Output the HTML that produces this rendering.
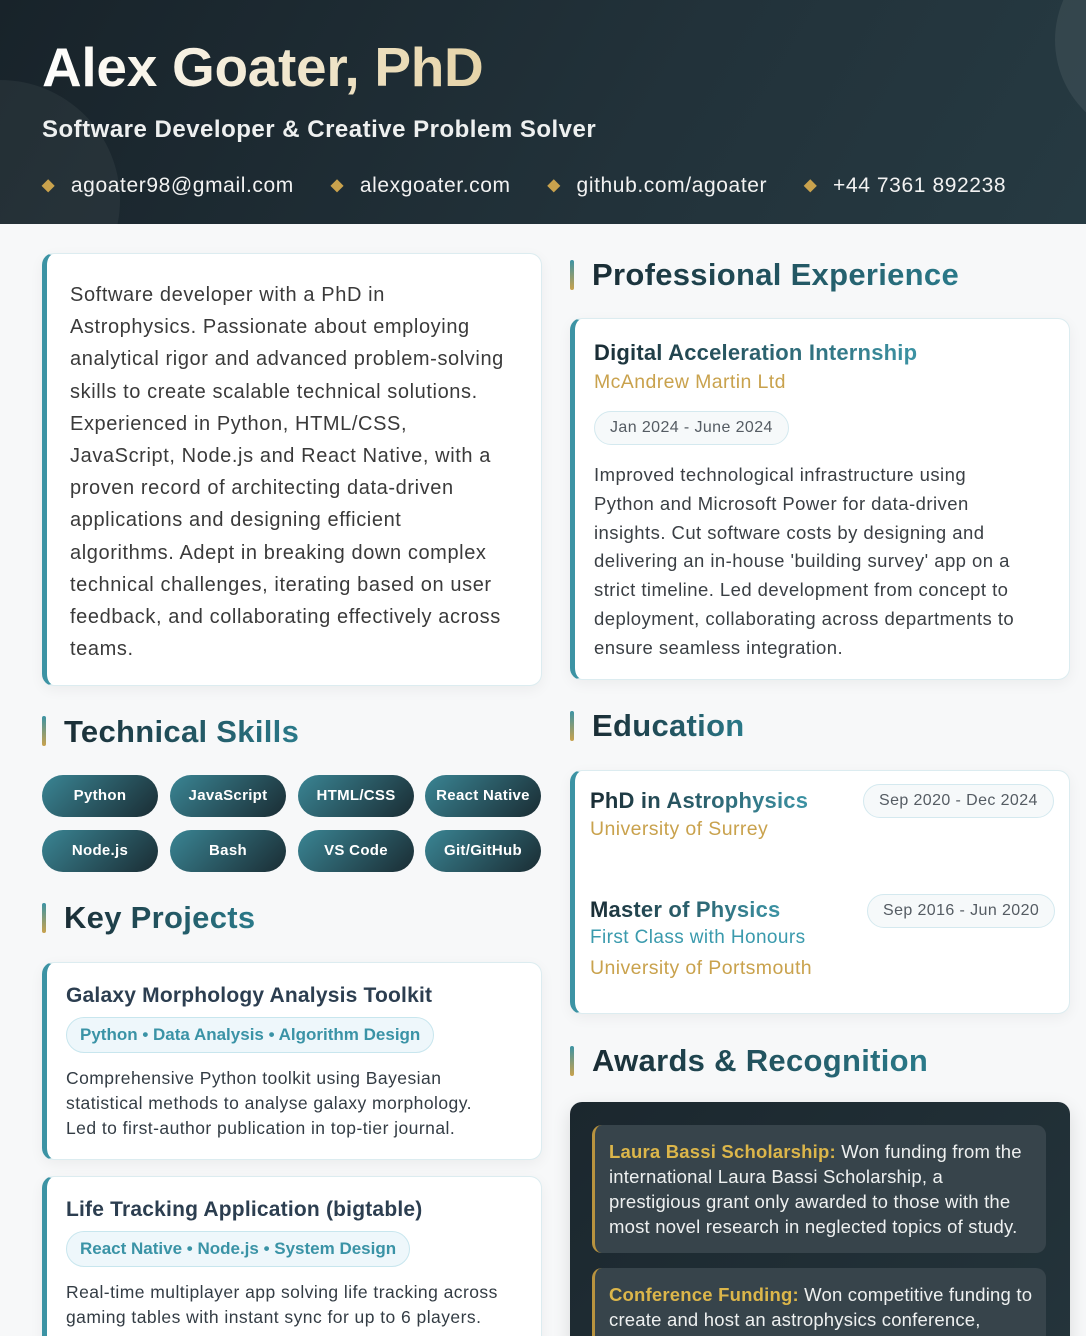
<!DOCTYPE html>
<html><head><meta charset="utf-8"><style>
*{margin:0;padding:0;box-sizing:border-box}
html,body{width:1086px;height:1336px;overflow:hidden}
body{background:#f7f8f9;font-family:"Liberation Sans",sans-serif}
#w{position:relative;width:1086px;height:1336px;overflow:hidden}
.hdr{position:absolute;left:0;top:0;width:1086px;height:224px;background:linear-gradient(120deg,#18232a 0%,#22323a 60%,#263a42 100%);overflow:hidden}
.hdr .c1{position:absolute;left:-120px;top:80px;width:240px;height:240px;border-radius:50%;background:rgba(255,255,255,0.05)}
.hdr .c2{position:absolute;left:1055px;top:-60px;width:200px;height:200px;border-radius:50%;background:rgba(255,255,255,0.07)}
.hdr h1{position:absolute;left:42px;top:35px;font-size:55px;font-weight:bold;letter-spacing:-0.3px;color:#f3ead6;background:linear-gradient(90deg,#ffffff,#e6d4a8);-webkit-background-clip:text;background-clip:text;-webkit-text-fill-color:transparent}
.hdr h2{position:absolute;left:42px;top:116px;font-size:24px;font-weight:bold;color:#eef0f0;letter-spacing:0.5px}
.contacts{position:absolute;left:42px;top:174px;font-size:21px;color:#f2f2f2;white-space:nowrap;letter-spacing:0.6px}
.contacts span{margin-right:37px}
.contacts b{color:#c9a24d;font-size:16px;margin-right:16px;position:relative;top:-2px}
.card{position:absolute;background:#fff;border:1px solid #dcecf0;border-left:5px solid #3c93a4;border-radius:12px;box-shadow:0 4px 14px rgba(0,0,0,0.05)}
.sh{position:absolute;font-size:31px;font-weight:bold;color:#1d3a44;background:linear-gradient(90deg,#1a2c34,#2a7a8a);-webkit-background-clip:text;background-clip:text;-webkit-text-fill-color:transparent;white-space:nowrap;letter-spacing:0.3px}
.bar{position:absolute;width:4px;height:30px;border-radius:2px;background:linear-gradient(#3c93a4,#c9a24d)}
.pill{position:absolute;width:116px;height:42px;border-radius:21px;background:linear-gradient(135deg,#3a8594,#1a2c33);color:#fff;font-size:15px;font-weight:bold;text-align:center;line-height:42px;letter-spacing:0.3px}
.summary{left:42px;top:253px;width:500px;height:433px;padding:25px 0 0 23px;font-size:20px;line-height:32.2px;color:#3a3a3a;letter-spacing:0.6px;white-space:nowrap}
.ptitle{font-size:21px;font-weight:bold;color:#2c3e50;letter-spacing:0.2px}
.tag{display:inline-block;margin-top:9px;padding:0 13px;height:36px;line-height:34px;border:1px solid #c8e6ee;background:#eef7fb;border-radius:18px;color:#3a93a6;font-size:17px;font-weight:bold}
.pbody{margin-top:13px;font-size:17.5px;line-height:25px;color:#333c44;letter-spacing:0.45px;white-space:nowrap}
.date{display:inline-block;border:1px solid #d4e9ef;background:#f6f9fa;border-radius:17px;height:34px;line-height:32px;padding:0 15px;font-size:16px;color:#555c63;letter-spacing:0.4px}
.gold{color:#c9a24d;letter-spacing:0.4px}
.award{position:absolute;left:22px;width:454px;background:#37444b;border-left:3px solid #b8933f;border-radius:10px;padding:14px 0 0 14px;font-size:18.5px;line-height:25px;color:#eef0f0;letter-spacing:0.2px;white-space:nowrap}
.award b{color:#dcb64a}
.gt{font-size:22px;font-weight:bold;color:#1f3a44;background:linear-gradient(90deg,#1a2c34,#3c93a4);-webkit-background-clip:text;background-clip:text;-webkit-text-fill-color:transparent;letter-spacing:0.2px}
</style></head><body><div id="w">
<div class="hdr"><div class="c1"></div><div class="c2"></div>
<h1>Alex Goater, PhD</h1>
<h2>Software Developer &amp; Creative Problem Solver</h2>
<div class="contacts"><span><b>◆</b>agoater98@gmail.com</span><span><b>◆</b>alexgoater.com</span><span><b>◆</b>github.com/agoater</span><span><b>◆</b>+44 7361 892238</span></div>
</div>

<div class="card summary">Software developer with a PhD in<br>Astrophysics. Passionate about employing<br>analytical rigor and advanced problem-solving<br>skills to create scalable technical solutions.<br>Experienced in Python, HTML/CSS,<br>JavaScript, Node.js and React Native, with a<br>proven record of architecting data-driven<br>applications and designing efficient<br>algorithms. Adept in breaking down complex<br>technical challenges, iterating based on user<br>feedback, and collaborating effectively across<br>teams.</div>

<div class="bar" style="left:42px;top:716px"></div><div class="sh" style="left:64px;top:714px">Technical Skills</div>
<div class="pill" style="left:42px;top:775px">Python</div>
<div class="pill" style="left:170px;top:775px">JavaScript</div>
<div class="pill" style="left:298px;top:775px">HTML/CSS</div>
<div class="pill" style="left:425px;top:775px">React Native</div>
<div class="pill" style="left:42px;top:830px">Node.js</div>
<div class="pill" style="left:170px;top:830px">Bash</div>
<div class="pill" style="left:298px;top:830px">VS Code</div>
<div class="pill" style="left:425px;top:830px">Git/GitHub</div>

<div class="bar" style="left:42px;top:903px"></div><div class="sh" style="left:64px;top:900px">Key Projects</div>
<div class="card" style="left:42px;top:962px;width:500px;height:198px;padding:21px 0 0 19px">
<div class="ptitle">Galaxy Morphology Analysis Toolkit</div>
<div class="tag">Python • Data Analysis • Algorithm Design</div>
<div class="pbody">Comprehensive Python toolkit using Bayesian<br>statistical methods to analyse galaxy morphology.<br>Led to first-author publication in top-tier journal.</div>
</div>
<div class="card" style="left:42px;top:1176px;width:500px;height:200px;padding:21px 0 0 19px">
<div class="ptitle">Life Tracking Application (bigtable)</div>
<div class="tag">React Native • Node.js • System Design</div>
<div class="pbody">Real-time multiplayer app solving life tracking across<br>gaming tables with instant sync for up to 6 players.</div>
</div>

<div class="bar" style="left:570px;top:260px"></div><div class="sh" style="left:592px;top:257px">Professional Experience</div>
<div class="card" style="left:570px;top:318px;width:500px;height:362px;padding:21px 0 0 19px">
<div class="gt" style="display:inline-block">Digital Acceleration Internship</div>
<div class="gold" style="font-size:19.5px;margin-top:5px">McAndrew Martin Ltd</div>
<div class="date" style="margin-top:17px">Jan 2024 - June 2024</div>
<div style="margin-top:16px;font-size:18.5px;line-height:28.8px;color:#3a3f44;letter-spacing:0.45px;white-space:nowrap">Improved technological infrastructure using<br>Python and Microsoft Power for data-driven<br>insights. Cut software costs by designing and<br>delivering an in-house 'building survey' app on a<br>strict timeline. Led development from concept to<br>deployment, collaborating across departments to<br>ensure seamless integration.</div>
</div>

<div class="bar" style="left:570px;top:711px"></div><div class="sh" style="left:592px;top:708px">Education</div>
<div class="card" style="left:570px;top:770px;width:500px;height:244px">
<div class="gt" style="position:absolute;left:15px;top:17px">PhD in Astrophysics</div>
<div class="gold" style="position:absolute;left:15px;top:47px;font-size:19.5px">University of Surrey</div>
<div class="date" style="position:absolute;left:288px;top:13px">Sep 2020 - Dec 2024</div>
<div class="gt" style="position:absolute;left:15px;top:126px">Master of Physics</div>
<div style="position:absolute;left:15px;top:156px;font-size:19px;color:#3a9aad;letter-spacing:0.4px">First Class with Honours</div>
<div class="gold" style="position:absolute;left:15px;top:186px;font-size:19.5px">University of Portsmouth</div>
<div class="date" style="position:absolute;left:292px;top:123px">Sep 2016 - Jun 2020</div>
</div>

<div class="bar" style="left:570px;top:1046px"></div><div class="sh" style="left:592px;top:1043px">Awards &amp; Recognition</div>
<div style="position:absolute;left:570px;top:1102px;width:500px;height:260px;border-radius:12px;background:linear-gradient(135deg,#1b272e,#24343b);box-shadow:0 6px 18px rgba(0,0,0,0.12)">
<div class="award" style="top:23px;height:128px"><b>Laura Bassi Scholarship:</b> Won funding from the<br>international Laura Bassi Scholarship, a<br>prestigious grant only awarded to those with the<br>most novel research in neglected topics of study.</div>
<div class="award" style="top:166px;height:120px"><b>Conference Funding:</b> Won competitive funding to<br>create and host an astrophysics conference,</div>
</div>
</div></body></html>
